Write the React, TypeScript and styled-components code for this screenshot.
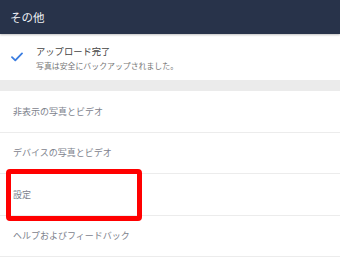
import React from 'react';
import styled, { createGlobalStyle } from 'styled-components';

const GlobalStyle = createGlobalStyle`
  html, body {
    margin: 0;
    padding: 0;
    background: #ffffff;
  }
  body {
    font-family: "Noto Sans CJK JP", "Noto Sans", sans-serif;
  }
`;

const Page = styled.div`
  position: relative;
  width: 340px;
  height: 280px;
  overflow: hidden;
  background: #ffffff;
`;

const Header = styled.header`
  height: 34px;
  display: flex;
  align-items: center;
  padding-left: 10px;
  background: #28334a;
  color: #eef0f4;
  font-size: 11.5px;
  box-shadow: 0 1px 2px rgba(0, 0, 0, 0.25);
`;

const UploadRow = styled.div`
  height: 46px;
  display: flex;
  align-items: center;
`;

const CheckIcon = styled.svg`
  width: 12px;
  height: 10px;
  margin: 0 13px 0 11px;
  flex-shrink: 0;
`;

const UploadText = styled.div`
  display: flex;
  flex-direction: column;
  gap: 4px;
  margin-top: 2px;
`;

const UploadTitle = styled.span`
  font-size: 9.3px;
  line-height: 11px;
  color: #444444;
`;

const UploadSub = styled.span`
  font-size: 7.9px;
  line-height: 9px;
  color: #777777;
`;

const Band = styled.div`
  height: 11px;
  background: #ebebeb;
`;

const MenuList = styled.ul`
  list-style: none;
  margin: 0;
  padding: 0;
`;

const MenuItem = styled.li`
  height: 40.5px;
  display: flex;
  align-items: center;
  padding-left: 13px;
  border-bottom: 1px solid #ececec;
  font-size: 9px;
  color: #7d828d;
`;

const Highlight = styled.div`
  position: absolute;
  left: 6px;
  top: 169px;
  width: 126px;
  height: 42px;
  border: 5px solid #ff0000;
  border-radius: 4px;
`;

const items = ['非表示の写真とビデオ', 'デバイスの写真とビデオ', '設定', 'ヘルプおよびフィードバック'];

const App = (): JSX.Element => (
  <Page>
    <GlobalStyle />
    <Header>その他</Header>
    <UploadRow>
      <CheckIcon viewBox="0 0 12 10">
        <path d="M1 5.2 L4.3 8.4 L11 1.4" fill="none" stroke="#3b7de0" strokeWidth="1.8" strokeLinecap="round" strokeLinejoin="round" />
      </CheckIcon>
      <UploadText>
        <UploadTitle>アップロード完了</UploadTitle>
        <UploadSub>写真は安全にバックアップされました。</UploadSub>
      </UploadText>
    </UploadRow>
    <Band />
    <MenuList>
      {items.map((label) => (
        <MenuItem key={label}>{label}</MenuItem>
      ))}
    </MenuList>
    <Highlight />
  </Page>
);

export default App;
